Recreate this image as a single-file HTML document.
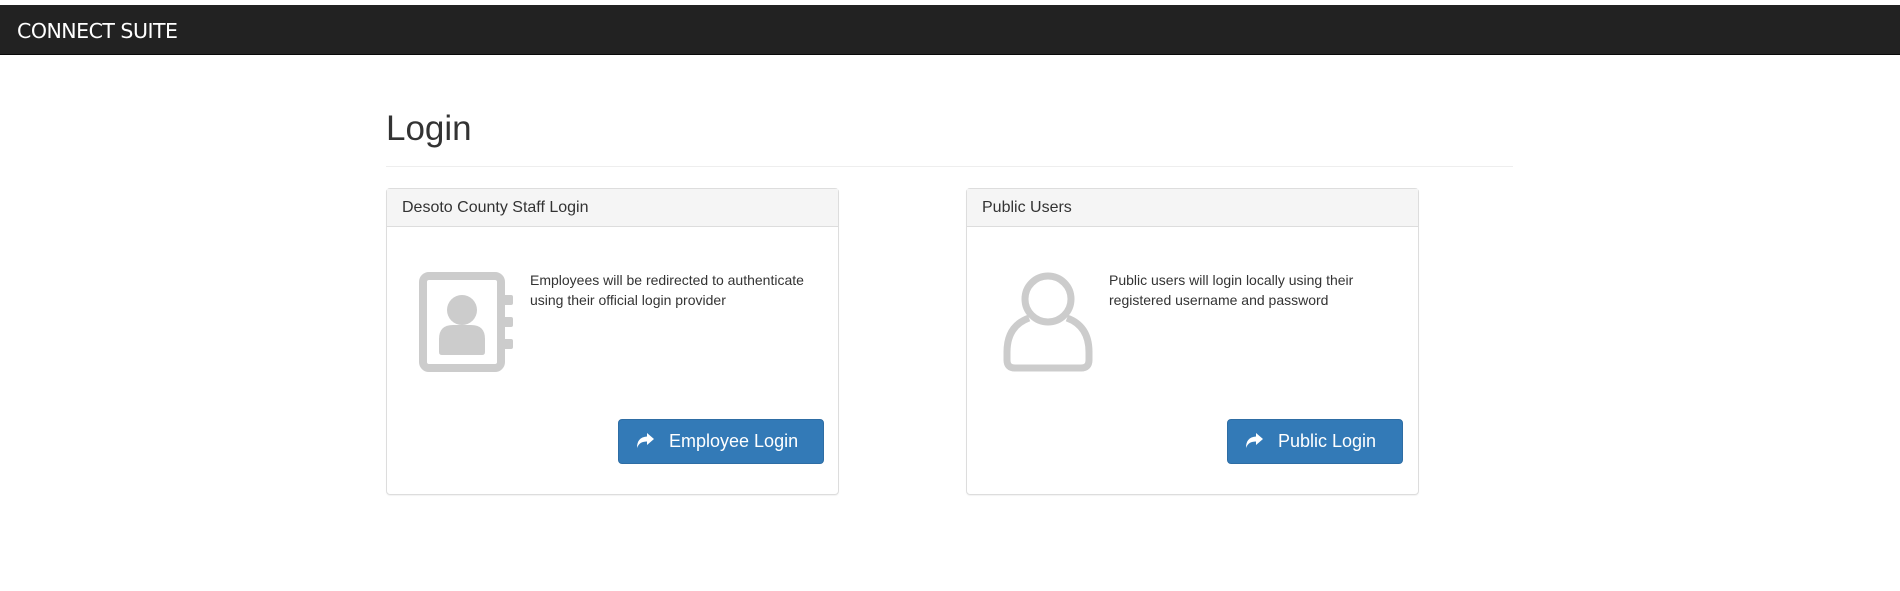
<!DOCTYPE html>
<html><head><meta charset="utf-8"><style>
*{box-sizing:border-box;margin:0;padding:0}
body{width:1900px;height:591px;background:#fff;font-family:"Liberation Sans",Arial,sans-serif;color:#333;position:relative;overflow:hidden}
.nav{position:absolute;left:0;top:5px;width:1900px;height:50px;background:#222;border-bottom:1px solid #080808}
.brand{position:absolute;left:17px;top:14px;color:#fff;font-size:20.5px;font-family:"DejaVu Sans","Liberation Sans",sans-serif;letter-spacing:-0.5px}
h1{position:absolute;left:386px;top:109px;font-size:35px;font-weight:normal;color:#333}
.hr{position:absolute;left:386px;top:166px;width:1127px;height:1px;background:#eee}
.panel{position:absolute;top:188px;width:453px;height:307px;border:1px solid #ddd;border-radius:4px;box-shadow:0 1px 1px rgba(0,0,0,.05)}
.ph{height:38px;background:#f5f5f5;border-bottom:1px solid #ddd;padding:0 15px;font-size:16px;line-height:38px;color:#333}
.txt{position:absolute;font-size:14px;line-height:19.5px;color:#333}
.btn{position:absolute;top:230px;height:45px;background:#337ab7;border:1px solid #2e6da4;border-radius:4px;color:#fff;font-size:18px;line-height:43px}
.btn svg{position:absolute;left:18px;top:13px}
.btn span{position:absolute;top:0}
</style></head><body>
<div class="nav"><div class="brand">CONNECT SUITE</div></div>
<h1>Login</h1>
<div class="hr"></div>
<div class="panel" style="left:386px">
<div class="ph">Desoto County Staff Login</div>
<svg style="position:absolute;left:32px;top:83px" width="95" height="100" viewBox="0 0 95 100">
<rect x="4" y="4" width="78" height="92" rx="6" fill="none" stroke="#ccc" stroke-width="8"/>
<rect x="84" y="23" width="10" height="10" rx="2" fill="#ccc"/>
<rect x="84" y="45" width="10" height="10" rx="2" fill="#ccc"/>
<rect x="84" y="67" width="10" height="10" rx="2" fill="#ccc"/>
<circle cx="43" cy="38" r="15" fill="#ccc"/>
<path d="M20 80 V67 Q20 53 34 53 H52 Q66 53 66 67 V80 Q66 83 63 83 H23 Q20 83 20 80Z" fill="#ccc"/>
</svg>
<div class="txt" style="left:143px;top:82px">Employees will be redirected to authenticate<br>using their official login provider</div>
<div class="btn" style="left:231px;width:206px">
<svg width="18" height="16" viewBox="0 0 18 16"><path d="M17 6 L10 0 V3.5 C3 4 0 8 0 15 C2 10 5 8.5 10 8.5 V12Z" fill="#fff"/></svg>
<span style="left:50px">Employee Login</span></div>
</div>
<div class="panel" style="left:966px">
<div class="ph">Public Users</div>
<svg style="position:absolute;left:36px;top:83px" width="90" height="100" viewBox="0 0 90 100">
<circle cx="45" cy="27" r="23" fill="none" stroke="#ccc" stroke-width="7"/>
<path d="M26 46 Q4 54 4 80 V88 Q4 96 12 96 H78 Q86 96 86 88 V80 Q86 54 64 46" fill="none" stroke="#ccc" stroke-width="7"/>
</svg>
<div class="txt" style="left:142px;top:82px">Public users will login locally using their<br>registered username and password</div>
<div class="btn" style="left:260px;width:176px">
<svg width="18" height="16" viewBox="0 0 18 16"><path d="M17 6 L10 0 V3.5 C3 4 0 8 0 15 C2 10 5 8.5 10 8.5 V12Z" fill="#fff"/></svg>
<span style="left:50px">Public Login</span></div>
</div>
</body></html>
